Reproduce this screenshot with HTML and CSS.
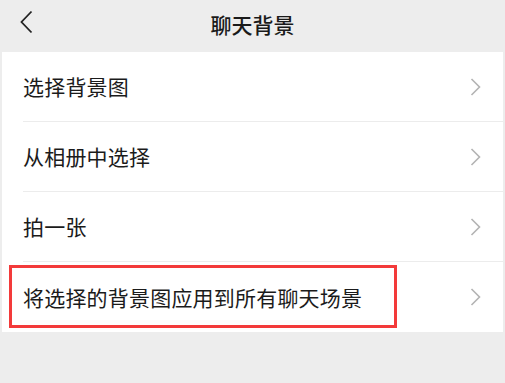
FILE: index.html
```html
<!DOCTYPE html>
<html lang="zh">
<head>
<meta charset="utf-8">
<link rel="stylesheet" href="styles.css">
</head>
<body>
<div class="page">
  <header class="nav">
    <svg class="back" width="14" height="24" viewBox="0 0 14 24"><path d="M12.5 1.5 L2.5 12 L12.5 22.5" fill="none" stroke="#222" stroke-width="1.8"/></svg>
    <div class="title">聊天背景</div>
  </header>
  <div class="list">
    <div class="row"><span class="label">选择背景图</span><svg class="chev" width="11" height="18" viewBox="0 0 11 18"><path d="M1.5 1 L9.5 9 L1.5 17" fill="none" stroke="#b3b3b3" stroke-width="1.6"/></svg></div>
    <div class="row"><span class="label">从相册中选择</span><svg class="chev" width="11" height="18" viewBox="0 0 11 18"><path d="M1.5 1 L9.5 9 L1.5 17" fill="none" stroke="#b3b3b3" stroke-width="1.6"/></svg></div>
    <div class="row"><span class="label">拍一张</span><svg class="chev" width="11" height="18" viewBox="0 0 11 18"><path d="M1.5 1 L9.5 9 L1.5 17" fill="none" stroke="#b3b3b3" stroke-width="1.6"/></svg></div>
    <div class="row last"><span class="label">将选择的背景图应用到所有聊天场景</span><svg class="chev" width="11" height="18" viewBox="0 0 11 18"><path d="M1.5 1 L9.5 9 L1.5 17" fill="none" stroke="#b3b3b3" stroke-width="1.6"/></svg><div class="highlight"></div></div>
  </div>
</div>
</body>
</html>
```
FILE: styles.css
```css
html, body {
  margin: 0;
  padding: 0;
  background: #ededed;
}
body {
  font-family: "Noto Sans CJK SC", "Noto Sans", sans-serif;
  color: #1b1b1b;
}
.page {
  width: 505px;
  height: 383px;
  background: #ededed;
}
.nav {
  height: 52px;
  position: relative;
  display: flex;
  align-items: center;
  justify-content: center;
}
.back {
  position: absolute;
  left: 19px;
  top: 10px;
}
.title {
  font-size: 21px;
  font-weight: 500;
  line-height: 1;
  margin-top: -4px;
  color: #1a1a1a;
}
.list {
  margin: 0 2px;
  background: #fff;
}
.row {
  position: relative;
  height: 70px;
  display: flex;
  align-items: center;
  justify-content: space-between;
  margin-left: 21px;
  padding-right: 22px;
  border-bottom: 1px solid #ececec;
  box-sizing: border-box;
}
.row.last {
  border-bottom: none;
}
.label {
  font-size: 21px;
  line-height: 1;
  letter-spacing: 0.2px;
}
.chev {
  display: block;
}
.highlight {
  position: absolute;
  left: -14px;
  top: 3px;
  width: 388px;
  height: 63px;
  border: 3px solid #f33a3a;
  box-sizing: border-box;
}
```
